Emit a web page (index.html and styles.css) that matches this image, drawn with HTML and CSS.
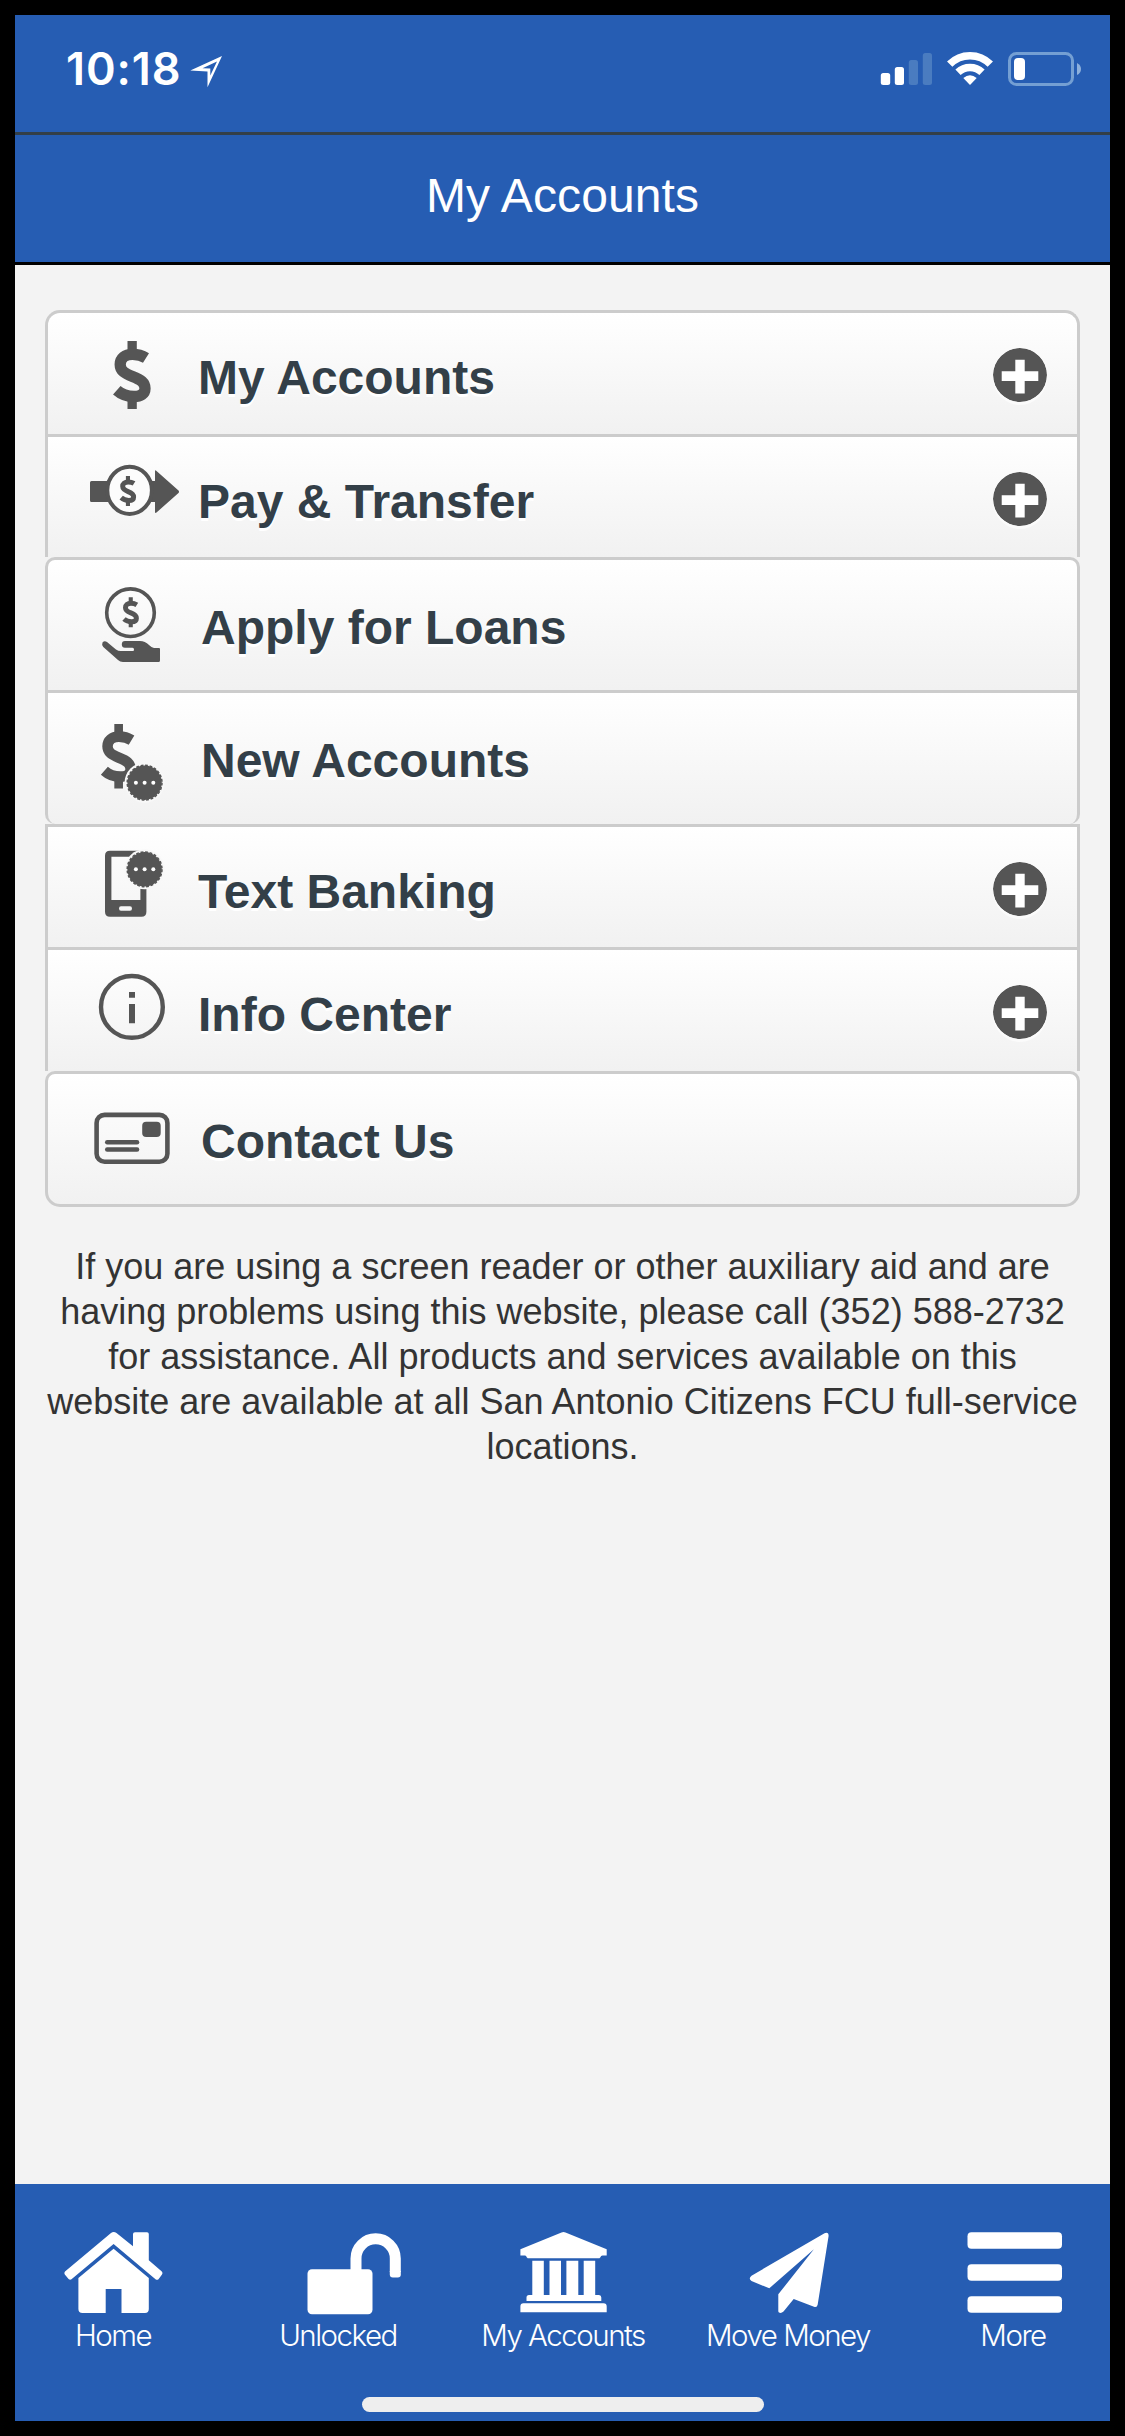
FILE: index.html
```html
<!DOCTYPE html>
<html lang="en">
<head>
<meta charset="utf-8">
<title>My Accounts</title>
<link rel="stylesheet" href="styles.css">
</head>
<body>
<svg class="defs" width="0" height="0" aria-hidden="true">
  <symbol id="dollar" viewBox="0 0 100 100" overflow="visible">
    <path d="M42.5 20h9.3v14h-9.3zM42.5 74h9.3v14h-9.3z" fill="#555"/>
    <path d="M61 37C57 34.5 52 33.400 47.5 33.400C40 33.400 35.200 37.5 35.200 43.5C35.200 50 40 52.5 47.5 55.5C56 58.8 60 61.5 60 67.5C60 73 55.5 75.500 49 75.500C42 75.500 36.500 73.500 31.800 69.300" fill="none" stroke="#555" stroke-width="11.300"/>
  </symbol>
  <symbol id="badge" viewBox="0 0 44 44" overflow="visible">
    <circle cx="22" cy="22" r="20" fill="#f8f8f8"/>
    <circle cx="22" cy="22" r="17.200" fill="#555"/>
    <circle cx="22" cy="22" r="17.400" fill="none" stroke="#555" stroke-width="1.500" stroke-dasharray="2.800 1.755"/>
    <circle cx="13.300" cy="22" r="2" fill="#fff"/><circle cx="22" cy="22" r="2" fill="#fff"/><circle cx="30.700" cy="22" r="2" fill="#fff"/>
  </symbol>
  <symbol id="plus" viewBox="0 0 54 54">
    <circle cx="27" cy="27" r="27" fill="#555"/>
    <path d="M8.700 23.300H22.300V11.700h9.400V23.300H45.300V33H31.700V45.400h-9.400V33H8.700z" fill="#fff"/>
  </symbol>
</svg>
<div class="screen">
  <div class="status">
    <span class="clock">10:18</span>
    <svg class="locate" width="34" height="34" viewBox="189 55 34 34"><path fill="#fff" fill-rule="evenodd" d="M222 56L190.300 70.500L207.500 71.500V87.300ZM217 61.500L202.500 68.300L210.300 68.500V75.500Z"/></svg>
    <svg class="signals" width="202" height="36" viewBox="880 51 202 36">
      <g fill="#fff"><rect x="880.800" y="73" width="9.400" height="12" rx="2.500"/><rect x="894.800" y="67" width="9.200" height="18" rx="2.500"/></g>
      <g fill="#4a7cc0"><rect x="908.800" y="60" width="9.200" height="25" rx="2.500"/><rect x="922.800" y="53" width="9.200" height="32" rx="2.500"/></g>
      <g fill="none" stroke="#fff" stroke-width="7.500"><path d="M949.700 64.200A28.500 28.500 0 0 1 990.300 64.200"/><path d="M958 72.300A17.200 17.200 0 0 1 982 72.300"/></g>
      <path fill="#fff" d="M970 85L963.300 78Q970 72.500 976.700 78Z"/>
      <rect x="1009.500" y="53.500" width="63" height="31" rx="7" fill="none" stroke="#749fd3" stroke-width="3"/>
      <rect x="1014" y="58" width="11" height="22" rx="4" fill="#fff"/>
      <path d="M1077 63Q1081 65 1081 69T1077 75Z" fill="#8db0dc"/>
    </svg>
  </div>
  <header class="title">My Accounts</header>
  <main class="content">
    <ul class="menu">
      <li class="row first">
        <svg class="icon" viewBox="0 0 100 100"><use href="#dollar" width="100" height="100"/></svg>
        <span class="label">My Accounts</span>
        <svg class="plus"><use href="#plus"/></svg>
      </li>
      <li class="row short">
        <svg class="icon" viewBox="0 0 100 100">
          <path d="M6.500 36H24V57H6.500Q5 57 5 55.500V37.500Q5 36 6.500 36ZM66 36h4V26Q70 24.500 71.500 26L93.500 45.500Q94.500 46.700 93.500 48L71.500 67.500Q70 68.500 70 67V57h-4Z" fill="#555"/>
          <ellipse cx="44.600" cy="45.300" rx="22.300" ry="23.600" fill="#fcfcfc" stroke="#555" stroke-width="4"/>
          <g transform="translate(22.200 22.200) scale(.44)"><use href="#dollar" width="100" height="100"/></g>
        </svg>
        <span class="label">Pay &amp; Transfer</span>
        <svg class="plus"><use href="#plus"/></svg>
      </li>
      <li class="row tall top">
        <svg class="icon" viewBox="0 0 100 100">
          <circle cx="45.500" cy="44.700" r="23.800" fill="none" stroke="#555" stroke-width="3.600"/>
          <g transform="translate(25 20.500) scale(.44)"><use href="#dollar" width="100" height="100"/></g>
          <path d="M18.300 79Q16.500 76.500 17.500 74.500Q19.500 72.200 22 74L31 81.500Q33 83 36 83H48Q49 83 49 81.400Q49 79.700 47.500 79.700H40Q36.800 79.500 36.800 76.400Q36.800 73 40 73H55Q60 73 64 77Q67 80 69 80H74Q75 80 75 81V92.500Q75 94 73.500 94H38Q35 94 33 92Z" fill="#555"/>
        </svg>
        <span class="label">Apply for Loans</span>
      </li>
      <li class="row taller bottom">
        <svg class="icon" viewBox="0 0 100 100">
          <g transform="translate(-10.200 4) scale(.93 .95)"><use href="#dollar" width="100" height="100"/></g>
          <use href="#badge" x="37.600" y="59.700" width="44" height="44"/>
        </svg>
        <span class="label">New Accounts</span>
      </li>
      <li class="row short">
        <svg class="icon" viewBox="0 0 100 100">
          <path fill="#555" fill-rule="evenodd" d="M25 15.700H56.400Q61.400 15.700 61.400 20.700V76.700Q61.400 81.700 56.400 81.700H25Q20 81.700 20 76.700V20.700Q20 15.700 25 15.700ZM26.400 21.700V65H55.400V21.700ZM36 71.300Q34 71.300 34 73.500T36 75.700H45Q47 75.700 47 73.500T45 71.300Z"/>
          <use href="#badge" x="37.600" y="12.300" width="44" height="44"/>
        </svg>
        <span class="label">Text Banking</span>
        <svg class="plus"><use href="#plus"/></svg>
      </li>
      <li class="row">
        <svg class="icon" viewBox="0 0 100 100">
          <ellipse cx="46.900" cy="48.900" rx="30.900" ry="30.900" fill="none" stroke="#555" stroke-width="4.400"/>
          <path d="M44 34h6v5.700h-6zM44 46h6v19.300h-6z" fill="#555"/>
        </svg>
        <span class="label">Info Center</span>
        <svg class="plus"><use href="#plus"/></svg>
      </li>
      <li class="row last top">
        <svg class="icon" viewBox="0 0 100 100">
          <rect x="11.600" y="32.900" width="70.800" height="46.900" rx="8" fill="none" stroke="#555" stroke-width="4.600"/>
          <g fill="#555"><rect x="57.200" y="39.700" width="18.500" height="15.300" rx="4"/><rect x="20" y="58" width="34.300" height="4.500" rx="2.200"/><rect x="20" y="65.200" width="34.300" height="4.500" rx="2.200"/></g>
        </svg>
        <span class="label">Contact Us</span>
      </li>
    </ul>
    <p class="note">If you are using a screen reader or other auxiliary aid and are<br>having problems using this website, please call (352) 588-2732<br>for assistance. All products and services available on this<br>website are available at all San Antonio Citizens FCU full-service<br>locations.</p>
  </main>
  <footer class="bottom-bar">
    <nav class="tabs">
      <a class="tab">
        <svg class="glyph" viewBox="0 0 100 90" fill="#fff"><path d="M48 4Q50.600 2.200 53.500 4L70 17.300V5Q70 3.300 72 3.300H84Q85.800 3.300 85.800 5V31.300L98.800 42.500Q100.200 44 99 45.500L95.500 50.300Q94 51.300 92.500 50.300L50.600 15L8.500 50.300Q7 51.300 5.600 50L1.800 45.500Q.700 44 2 42.500Z"/><path d="M50.600 19.700L85.800 49V80Q85.800 84 82 84H58.500V60H42.700V84H19.500Q15.400 84 15.400 80V49Z"/></svg>
        <span class="caption">Home</span>
      </a>
      <a class="tab">
        <svg class="glyph" viewBox="0 0 100 90"><rect x="19.500" y="40.300" width="65" height="45" rx="4.500" fill="#fff"/><path d="M68 43V29.400A19.650 19.600 0 0 1 107.300 29.400V43" fill="none" stroke="#fff" stroke-width="11"/><path d="M101.800 42h11v3.500q0 3-3 3h-5q-3 0-3-3z" fill="#fff"/></svg>
        <span class="caption">Unlocked</span>
      </a>
      <a class="tab">
        <svg class="glyph" viewBox="0 0 100 90" fill="#fff"><path d="M7.400 20.300L48.500 3.500Q50.500 2.500 52.500 3.500L93.700 20.300V26.500H89.500Q87.600 26.500 87.600 28L86.500 29.200H14.700L13.500 28Q13.500 26.500 12 26.500H7.400ZM19.300 31.700H30.800V66H36.500V31.700H48V66H53.400V31.700H65.300V66H70.700V31.700H82.200V66H86Q88.300 66 88.300 68.500V72H13.500V68.500Q13.500 66 16 66H19.300ZM10.500 74.300H90.500Q93.700 74.300 93.700 77.500V83.300H7.400V77.500Q7.400 74.300 10.500 74.300Z"/></svg>
        <span class="caption">My Accounts</span>
      </a>
      <a class="tab">
        <svg class="glyph" viewBox="0 0 100 90" fill="#fff"><path d="M86.500 4.200Q90.700 2.500 90.600 7L79.700 75.500Q79 79 76 77.800L55.700 70L45.500 82.500Q43 84.800 41 83.500Q40.300 83 40.300 82V65.300L75.900 20.300L31.300 59.300L13.500 52Q10 49.500 13.500 46.700Z"/></svg>
        <span class="caption">Move Money</span>
      </a>
      <a class="tab">
        <svg class="glyph" viewBox="0 0 100 90" fill="#fff"><rect x="4.500" y="3.300" width="94.500" height="16.500" rx="4"/><rect x="4.500" y="35.300" width="94.500" height="16.500" rx="4"/><rect x="4.500" y="67.300" width="94.500" height="16.500" rx="4"/></svg>
        <span class="caption">More</span>
      </a>
    </nav>
    <div class="home-indicator"></div>
  </footer>
</div>
</body>
</html>
```
FILE: styles.css
```css
* { box-sizing: border-box; }
body {
  margin: 0;
  background: #000;
  font-family: "Liberation Sans", Arial, sans-serif;
}
.defs { display: block; }
.screen {
  width: 1125px;
  height: 2436px;
  border: 15px solid #000;
  background: #f3f3f3;
  display: flex;
  flex-direction: column;
  overflow: hidden;
}
.status {
  flex: none;
  height: 120px;
  background: #265db3;
  border-bottom: 3px solid #333f48;
  display: flex;
  align-items: flex-start;
  padding: 36px 28px 0 51px;
  color: #fff;
}
.clock {
  font: 600 45px/36px Inter, sans-serif;
  letter-spacing: 0.9px;
  width: 123px;
  white-space: nowrap;
}
.locate { margin-top: 4px; }
.signals { margin-left: auto; }
.title {
  flex: none;
  height: 130px;
  background: #265db3;
  border-bottom: 3px solid #000;
  color: #fff;
  font-size: 48px;
  letter-spacing: 0.1px;
  line-height: 121px;
  text-align: center;
}
.content {
  flex: 1;
  padding: 45px 30px 0;
}
.menu {
  list-style: none;
  margin: 0;
  padding: 0;
}
.row {
  display: flex;
  align-items: flex-start;
  height: 124px;
  border: 3px solid #ccc;
  border-bottom: 0;
  background: linear-gradient(#fff, #f1f1f1);
  padding: 8px 30px 0 37px;
}
.short { height: 123px; }
.tall { height: 133px; }
.taller { height: 134px; }
.first { border-radius: 15px 15px 0 0; }
.top { border-radius: 10px 10px 0 0; }
.bottom { border-radius: 0 0 10px 10px; }
.last {
  height: 136px;
  border-bottom: 3px solid #ccc;
  border-radius: 10px 10px 15px 15px;
}
.icon {
  flex: none;
  width: 100px;
  height: 100px;
  overflow: visible;
}
.label {
  margin: 27px 0 0 13px;
  font-size: 48px;
  font-weight: bold;
  line-height: 60px;
  color: #333f48;
  text-shadow: 0 3px 0 #fff;
  white-space: nowrap;
}
.tall .label, .taller .label, .last .label { margin: 30px 0 0 16px; }
.plus {
  flex: none;
  width: 54px;
  height: 54px;
  margin: 27px 0 0 auto;
  border-radius: 50%;
  box-shadow: 0 3px 0 rgba(255, 255, 255, .6);
}
.note {
  margin: 37px -20px 0;
  font-size: 36px;
  line-height: 45px;
  text-align: center;
  color: #333;
}
.bottom-bar {
  flex: none;
  height: 237px;
  background: #265db3;
  display: flex;
  flex-direction: column;
  align-items: center;
  justify-content: space-between;
  padding: 45px 0 9px;
}
.tabs { display: flex; }
.tab {
  flex: 0 0 225px;
  display: flex;
  flex-direction: column;
  align-items: center;
  color: #fff;
}
.glyph {
  width: 100px;
  height: 90px;
  overflow: visible;
}
.caption {
  margin-top: -2px;
  padding-left: 1px;
  font: 350 29.5px/36px Inter, sans-serif;
  letter-spacing: -1.5px;
  white-space: nowrap;
}
.home-indicator {
  width: 402px;
  height: 15px;
  border-radius: 8px;
  background: #eee;
}
```
